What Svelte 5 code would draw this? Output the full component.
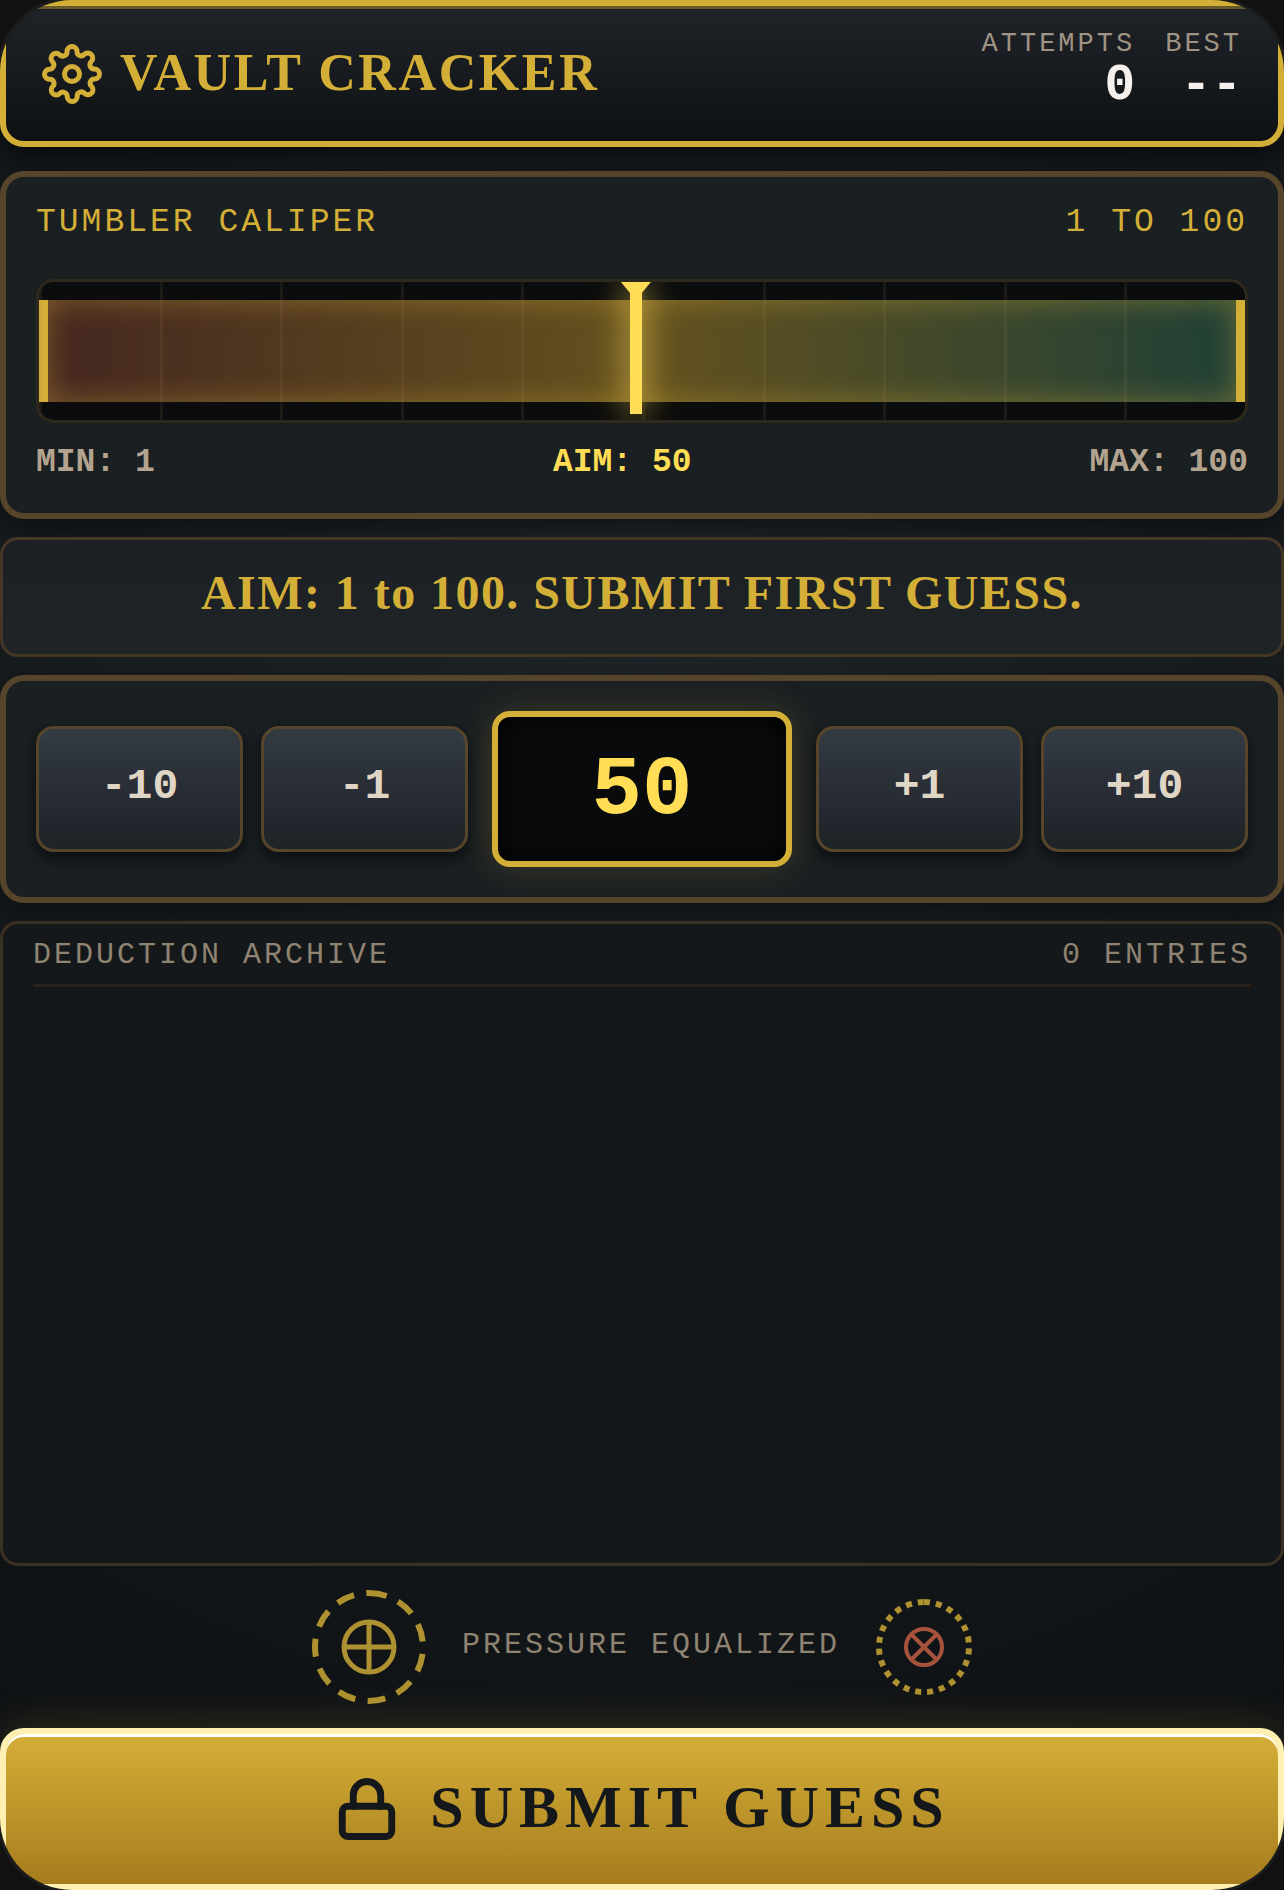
<script>
  const LOW = 1;
  const HIGH = 100;

  let secret = Math.floor(Math.random() * HIGH) + LOW;
  let min = LOW;
  let max = HIGH;
  let aim = 50;
  let best = null;
  let guesses = [];
  let solved = false;

  const percent = value => ((value - LOW) / (HIGH - LOW)) * 100;
  const nudge = step => () => (aim = Math.min(max, Math.max(min, aim + step)));

  $: message = solved
    ? `VAULT OPEN: ${aim}.`
    : `AIM: ${min} to ${max}. SUBMIT ${guesses.length ? 'NEXT' : 'FIRST'} GUESS.`;

  function submit() {
    if (solved) return;
    guesses = [...guesses, { value: aim, hint: aim < secret ? 'TOO LOW' : aim > secret ? 'TOO HIGH' : 'CRACKED' }];
    if (aim === secret) {
      solved = true;
      if (best === null || guesses.length < best) best = guesses.length;
      return;
    }
    if (aim < secret) min = aim + 1;
    else max = aim - 1;
    aim = Math.floor((min + max) / 2);
  }
</script>

<main class="app">
  <header>
    <div class="brand">
      <svg class="gear" viewBox="0 0 24 24" aria-hidden="true">
        <circle cx="12" cy="12" r="3" />
        <path d="M19.4 15a1.65 1.65 0 0 0 .33 1.82l.06.06a2 2 0 0 1 0 2.83 2 2 0 0 1-2.83 0l-.06-.06a1.65 1.65 0 0 0-1.82-.33 1.65 1.65 0 0 0-1 1.51V21a2 2 0 0 1-2 2 2 2 0 0 1-2-2v-.09A1.65 1.65 0 0 0 9 19.4a1.65 1.65 0 0 0-1.82.33l-.06.06a2 2 0 0 1-2.83 0 2 2 0 0 1 0-2.83l.06-.06a1.65 1.65 0 0 0 .33-1.82 1.65 1.65 0 0 0-1.51-1H3a2 2 0 0 1-2-2 2 2 0 0 1 2-2h.09A1.65 1.65 0 0 0 4.6 9a1.65 1.65 0 0 0-.33-1.82l-.06-.06a2 2 0 0 1 0-2.83 2 2 0 0 1 2.83 0l.06.06a1.65 1.65 0 0 0 1.82.33H9a1.65 1.65 0 0 0 1-1.51V3a2 2 0 0 1 2-2 2 2 0 0 1 2 2v.09a1.65 1.65 0 0 0 1 1.51 1.65 1.65 0 0 0 1.82-.33l.06-.06a2 2 0 0 1 2.83 0 2 2 0 0 1 0 2.83l-.06.06a1.65 1.65 0 0 0-.33 1.82V9a1.65 1.65 0 0 0 1.51 1H21a2 2 0 0 1 2 2 2 2 0 0 1-2 2h-.09a1.65 1.65 0 0 0-1.51 1z" />
      </svg>
      <h1>VAULT CRACKER</h1>
    </div>
    <dl class="stats">
      <div>
        <dt>ATTEMPTS</dt>
        <dd>{guesses.length}</dd>
      </div>
      <div>
        <dt>BEST</dt>
        <dd>{best ?? '--'}</dd>
      </div>
    </dl>
  </header>

  <section class="panel caliper">
    <div class="row title">
      <h2>TUMBLER CALIPER</h2>
      <span>{LOW} TO {HIGH}</span>
    </div>
    <div class="track">
      <div class="range" style="margin-left: {percent(min)}%; margin-right: {100 - percent(max)}%"></div>
      <div class="ticks"></div>
      <div class="needle" style="left: {percent(aim)}%"></div>
    </div>
    <div class="row limits">
      <span>MIN: {min}</span>
      <span class="aim">AIM: {aim}</span>
      <span>MAX: {max}</span>
    </div>
  </section>

  <p class="status" role="status">{message}</p>

  <section class="panel dial">
    <div class="steps">
      <button type="button" on:click={nudge(-10)}>-10</button>
      <button type="button" on:click={nudge(-1)}>-1</button>
    </div>
    <output>{aim}</output>
    <div class="steps">
      <button type="button" on:click={nudge(1)}>+1</button>
      <button type="button" on:click={nudge(10)}>+10</button>
    </div>
  </section>

  <section class="archive">
    <div class="row archive_head">
      <h2>DEDUCTION ARCHIVE</h2>
      <span>{guesses.length} ENTRIES</span>
    </div>
    <ol>
      {#each guesses as guess}
        <li class="row"><span>{guess.value}</span><span>{guess.hint}</span></li>
      {/each}
    </ol>
  </section>

  <div class="pressure">
    <svg class="gauge_large" viewBox="0 0 114 114" aria-hidden="true">
      <circle cx="57" cy="57" r="54" stroke-width="6" stroke-dasharray="18 12.55" transform="rotate(-90 57 57)" />
      <circle cx="57" cy="57" r="25" stroke-width="5" />
      <path d="M57 32v50M32 57h50" stroke-width="5" />
    </svg>
    <span>PRESSURE EQUALIZED</span>
    <svg class="gauge_small" viewBox="0 0 96 96" aria-hidden="true">
      <circle cx="48" cy="48" r="45" stroke-width="6" stroke-dasharray="6 6" transform="rotate(-90 48 48)" />
      <g class="valve">
        <circle cx="48" cy="48" r="18" stroke-width="4" />
        <path d="M35.5 35.5l25 25M60.5 35.5l-25 25" stroke-width="4" />
      </g>
    </svg>
  </div>

  <button class="submit" type="button" on:click={submit}>
    <svg viewBox="0 0 24 24" aria-hidden="true">
      <rect x="3" y="11" width="18" height="11" rx="2" />
      <path d="M7 11V7a5 5 0 0 1 10 0v4" />
    </svg>
    <span>SUBMIT GUESS</span>
  </button>
</main>

<style>
  :global(body) {
    margin: 0;
    background: #111;
  }

  .app {
    --gold: #d4af37;
    --bright: #ffdd55;
    --bronze: #57452b;
    --mono: "Liberation Mono", "Courier New", monospace;
    --serif: "Liberation Serif", "Times New Roman", serif;
    box-sizing: border-box;
    display: flex;
    flex-direction: column;
    min-height: 100vh;
    overflow: hidden;
    border-radius: 72px;
    box-shadow: 0 0 0 3px #1c1c1c;
    background: radial-gradient(circle at 50% 30%, #20262a, #14181b 60%, #0d0f12);
    color: #8f8372;
    font-family: var(--mono);
  }

  h1, h2, p, dl, dd, ol {
    margin: 0;
    padding: 0;
    font-size: inherit;
    font-weight: inherit;
  }
  svg {
    flex: none;
    fill: none;
    stroke: currentColor;
  }
  button {
    font-family: inherit;
    cursor: pointer;
  }
  .row {
    display: flex;
    justify-content: space-between;
  }

  header {
    display: flex;
    justify-content: space-between;
    align-items: center;
    margin-bottom: 24px;
    padding: 24px 36px;
    border: 6px solid var(--gold);
    border-radius: 24px;
    background: linear-gradient(#1f2428, #1a1d22 35%, #14181b 65%, #0e1012);
    box-shadow: 0 12px 30px rgba(0, 0, 0, .6), inset 0 3px 0 rgba(212, 175, 55, .4);
  }
  .brand {
    display: flex;
    align-items: center;
    gap: 18px;
    color: var(--gold);
  }
  .gear {
    width: 60px;
    height: 60px;
    stroke-width: 2;
    stroke-linecap: round;
    stroke-linejoin: round;
  }
  h1 {
    padding-bottom: 2px;
    font-family: var(--serif);
    font-size: 52px;
    font-weight: bold;
    line-height: 60px;
    letter-spacing: .05em;
  }
  .stats {
    display: flex;
    gap: 30px;
    padding-bottom: 4px;
    text-align: right;
  }
  dt {
    color: #a09484;
    font-size: 27px;
    line-height: 29px;
    letter-spacing: 3px;
  }
  dd {
    color: #f5f0eb;
    font-size: 51px;
    font-weight: bold;
    line-height: 54px;
  }

  .panel {
    margin-bottom: 18px;
    padding: 30px;
    border: 6px solid var(--bronze);
    border-radius: 24px;
    background: #1a1f22;
    box-shadow: 0 12px 36px rgba(0, 0, 0, .5);
  }
  .title {
    margin-bottom: 41px;
    color: var(--gold);
    font-size: 33px;
    line-height: 31px;
    letter-spacing: 3px;
  }
  .track {
    position: relative;
    height: 138px;
    overflow: hidden;
    border: 3px solid #2f281c;
    border-radius: 18px;
    background: #0b0c0d;
    display: flex;
  }
  .range {
    flex: 1;
    margin-top: 18px;
    margin-bottom: 18px;
    border: solid var(--gold);
    border-width: 0 9px;
    background: linear-gradient(90deg, #452720, #64511f 50%, #204036);
    box-shadow: inset 0 0 30px rgba(212, 175, 55, .4);
  }
  .ticks {
    position: absolute;
    inset: 0;
    background: repeating-linear-gradient(90deg, rgba(160, 130, 90, .12) 0 3px, transparent 3px 10%);
  }
  .needle {
    position: absolute;
    top: 0;
    width: 12px;
    height: 132px;
    margin-left: -6px;
    background: var(--bright);
    box-shadow: 0 0 45px rgba(255, 221, 85, .4), 0 0 30px rgba(255, 221, 85, .7);
  }
  .needle::before {
    content: '';
    position: absolute;
    top: 0;
    left: -9px;
    width: 30px;
    height: 18px;
    background: var(--bright);
    clip-path: polygon(0 0, 100% 0, 50% 100%);
  }
  .limits {
    margin-top: 18px;
    padding-top: 2px;
    color: #b3a48f;
    font-size: 33px;
    font-weight: bold;
    line-height: 40px;
  }
  .aim {
    color: var(--bright);
  }

  .status {
    margin-bottom: 18px;
    padding: 24px 30px 32px;
    border: 3px solid #443725;
    border-radius: 18px;
    background: linear-gradient(#1c2024, #1f2427);
    color: var(--gold);
    font-family: var(--serif);
    font-size: 48px;
    font-weight: bold;
    line-height: 58px;
    letter-spacing: .03em;
    text-align: center;
  }

  .dial {
    display: flex;
    align-items: center;
    gap: 24px;
  }
  .steps {
    display: flex;
    flex: 1;
    gap: 18px;
  }
  .steps button {
    flex: 1;
    height: 126px;
    padding: 0 0 6px;
    border: 3px solid var(--bronze);
    border-radius: 18px;
    background: linear-gradient(#333b42, #252830 70%, #1e2326);
    box-shadow: 0 6px 15px rgba(0, 0, 0, .6);
    color: #e0d6c6;
    font-size: 43px;
    font-weight: bold;
  }
  output {
    box-sizing: border-box;
    width: 300px;
    padding-top: 4px;
    border: 6px solid var(--gold);
    border-radius: 18px;
    background: #090a0c;
    box-shadow: 0 0 36px rgba(212, 175, 55, .2), inset 0 0 24px #000;
    color: var(--bright);
    font-size: 84px;
    font-weight: bold;
    line-height: 140px;
    text-align: center;
  }

  .archive {
    flex: 1;
    padding: 12px 30px;
    border: 3px solid #3a3024;
    border-radius: 18px;
    background: #14181a;
    font-size: 30px;
    line-height: 38px;
    letter-spacing: 3px;
  }
  .archive_head {
    padding-bottom: 10px;
    border-bottom: 3px solid #2d2219;
  }
  ol {
    list-style: none;
  }
  li {
    padding-top: 12px;
  }

  .pressure {
    display: flex;
    justify-content: center;
    align-items: center;
    gap: 36px;
    padding: 24px 0;
    font-size: 30px;
    line-height: 36px;
    letter-spacing: 3px;
  }
  .pressure span {
    padding-bottom: 4px;
  }
  .pressure svg {
    color: #ae9130;
  }
  .gauge_large {
    width: 114px;
    height: 114px;
  }
  .gauge_small {
    width: 96px;
    height: 96px;
  }
  .valve {
    stroke: #a7523b;
  }

  .submit {
    display: flex;
    justify-content: center;
    align-items: center;
    gap: 30px;
    height: 162px;
    border: 6px solid #ffefb0;
    border-radius: 24px;
    background: linear-gradient(var(--gold), #a67c1e);
    box-shadow: 0 0 45px rgba(212, 175, 55, .2), inset 0 3px 0 #fff;
    color: #14181b;
    font-family: var(--serif);
    font-size: 60px;
    font-weight: bold;
    letter-spacing: 6px;
  }
  .submit svg {
    width: 66px;
    height: 66px;
    stroke-width: 2.5;
    stroke-linecap: round;
    stroke-linejoin: round;
  }
  .submit span {
    padding-bottom: 3px;
  }
</style>
